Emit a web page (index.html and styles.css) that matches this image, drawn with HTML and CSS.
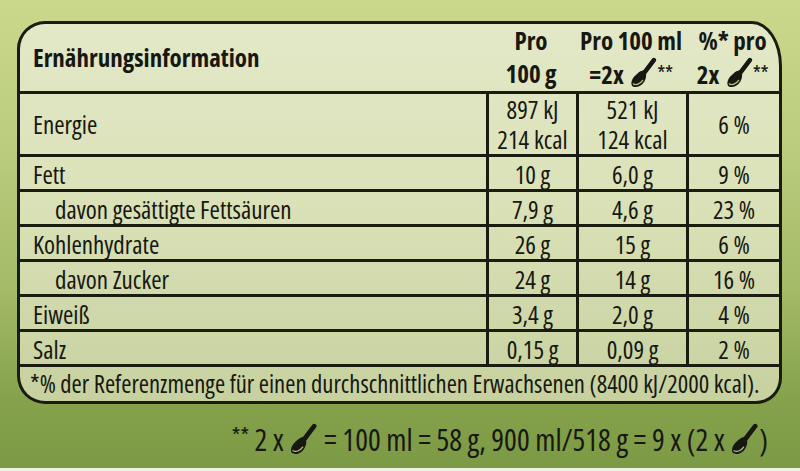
FILE: index.html
```html
<!DOCTYPE html>
<html lang="de">
<head>
<meta charset="utf-8">
<title>Ernährungsinformation</title>
<link rel="stylesheet" href="styles.css">
</head>
<body>
<svg class="defs" width="0" height="0" aria-hidden="true">
  <defs>
    <symbol id="scoop" viewBox="0 0 26 30">
      <line x1="23" y1="3" x2="13.5" y2="15.5" stroke="currentColor" stroke-width="4.4" stroke-linecap="round"/>
      <path d="M14 13.5 C17 16.5 15.5 22.5 12 26.2 C9 29.4 3.8 29.9 2.1 28 C0.4 26 1.5 21.5 4.5 18.5 C7.5 15.5 11.5 11.8 14 13.5 Z" fill="currentColor"/>
      <path d="M3.2 26 C5.8 27.6 9.6 26.2 12.2 22.6" fill="none" stroke="#b9c68d" stroke-width="1.2" stroke-linecap="round"/>
    </symbol>
  </defs>
</svg>
<div class="page">
  <div class="panel">
    <div class="row head">
      <div class="c title">Ernährungsinformation</div>
      <div class="c hd">Pro<br>100 g</div>
      <div class="c hd">Pro 100 ml<br>=2x <svg class="scoop sh"><use href="#scoop"/></svg><span class="stars">**</span></div>
      <div class="c hd">%* pro<br>2x <svg class="scoop sh"><use href="#scoop"/></svg><span class="stars">**</span></div>
    </div>
    <div class="row energy">
      <div class="c lbl">Energie</div>
      <div class="c num two">897 kJ<br>214 kcal</div>
      <div class="c num two">521 kJ<br>124 kcal</div>
      <div class="c num">6 %</div>
    </div>
    <div class="row">
      <div class="c lbl">Fett</div>
      <div class="c num">10 g</div>
      <div class="c num">6,0 g</div>
      <div class="c num">9 %</div>
    </div>
    <div class="row">
      <div class="c lbl sub">davon gesättigte Fettsäuren</div>
      <div class="c num">7,9 g</div>
      <div class="c num">4,6 g</div>
      <div class="c num">23 %</div>
    </div>
    <div class="row">
      <div class="c lbl">Kohlenhydrate</div>
      <div class="c num">26 g</div>
      <div class="c num">15 g</div>
      <div class="c num">6 %</div>
    </div>
    <div class="row">
      <div class="c lbl sub">davon Zucker</div>
      <div class="c num">24 g</div>
      <div class="c num">14 g</div>
      <div class="c num">16 %</div>
    </div>
    <div class="row">
      <div class="c lbl">Eiweiß</div>
      <div class="c num">3,4 g</div>
      <div class="c num">2,0 g</div>
      <div class="c num">4 %</div>
    </div>
    <div class="row">
      <div class="c lbl">Salz</div>
      <div class="c num">0,15 g</div>
      <div class="c num">0,09 g</div>
      <div class="c num">2 %</div>
    </div>
    <div class="note">*% der Referenzmenge für einen durchschnittlichen Erwachsenen (8400 kJ/2000 kcal).</div>
  </div>
  <div class="footer"><span class="fstars">**</span> 2 x <svg class="scoop sf"><use href="#scoop"/></svg> = 100 ml = 58 g, 900 ml/518 g = 9 x (2 x <svg class="scoop sf"><use href="#scoop"/></svg>)</div>
</div>
</body>
</html>
```
FILE: styles.css
```css
html, body {
  margin: 0;
  padding: 0;
}
body {
  background: #eef0e6;
  font-family: "Open Sans", "DejaVu Sans Condensed", sans-serif;
  font-stretch: condensed;
  color: #17180f;
}
.defs {
  position: absolute;
  width: 0;
  height: 0;
}
.page {
  width: 800px;
  height: 468px;
  box-sizing: border-box;
  padding: 21px 18px 0 17px;
  background: linear-gradient(180deg, #cad88b 0%, #bccd80 30%, #a3ba67 62%, #86a24c 85%, #7c9945 100%);
}
.panel {
  border: 3px solid #1b1c10;
  border-radius: 28px 30px 26px 28px / 28px 45px 26px 28px;
  background: linear-gradient(180deg, #e3e8c7 0%, #dbe2b9 45%, #c7d19f 100%);
  overflow: hidden;
}
.row {
  display: grid;
  grid-template-columns: 466px 90px 110px 93px;
  height: 32px;
  border-top: 3px solid #1b1c10;
}
.row .c {
  box-sizing: border-box;
  display: flex;
  align-items: center;
  white-space: nowrap;
}
.row .c + .c {
  border-left: 3px solid #1b1c10;
}
.row.head {
  border-top: none;
  height: 67px;
}
.row.head .c + .c {
  border-left: none;
}
.row.energy {
  height: 60px;
}
.title {
  font-weight: bold;
  font-size: 25px;
  padding-left: 13px;
  padding-bottom: 2px;
}
.hd {
  display: block !important;
  font-weight: bold;
  font-size: 25px;
  line-height: 33px;
  text-align: center;
}
.stars {
  font-weight: normal;
  font-size: 21px;
  vertical-align: 3px;
  letter-spacing: -0.5px;
}
.scoop {
  display: inline-block;
}
.sh {
  width: 27px;
  height: 31px;
  vertical-align: -4px;
  margin-left: 2px;
}
.sf {
  width: 29px;
  height: 32px;
  vertical-align: -4px;
}
.lbl {
  font-size: 25px;
  padding-left: 13px;
}
.lbl.sub {
  padding-left: 35px;
}
.num {
  font-size: 25px;
  justify-content: center;
  text-align: center;
}
.num.two {
  line-height: 30px;
}
.note {
  border-top: 3px solid #1b1c10;
  height: 37px;
  box-sizing: border-box;
  padding: 2px 0 0 10px;
  font-size: 24.65px;
  line-height: 30px;
  white-space: nowrap;
}
.footer {
  margin-top: 10px;
  padding-right: 14px;
  text-align: right;
  font-size: 30px;
  line-height: 40px;
  white-space: nowrap;
}
.fstars {
  font-size: 22px;
  vertical-align: 8px;
}
```
